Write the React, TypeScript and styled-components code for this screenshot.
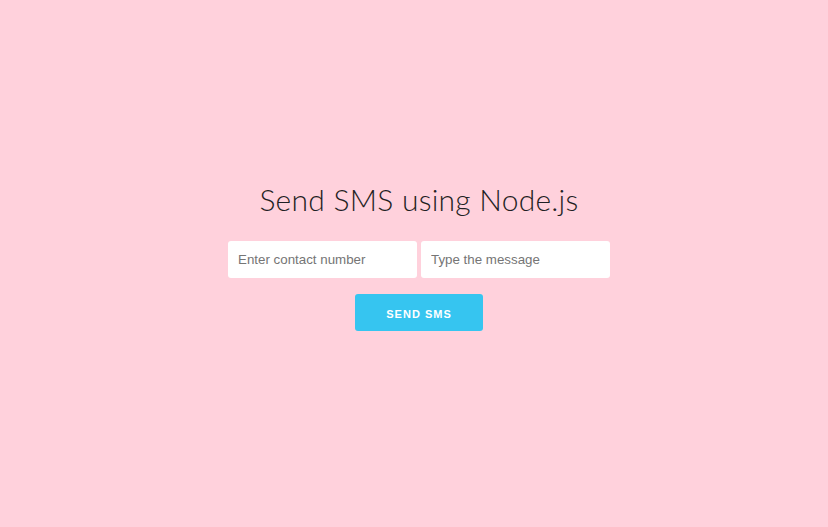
import React from "react";
import styled, { createGlobalStyle } from "styled-components";

const Global = createGlobalStyle`
  html, body { margin: 0; padding: 0; height: 100%; }
  body { background: #ffd1dc; font-family: "Liberation Sans", Arial, sans-serif; }
  #root { height: 100%; }
`;

const Page = styled.div`
  height: 527px;
  display: flex;
  flex-direction: column;
  align-items: center;
  justify-content: center;
  padding: 0 0 16px 10px;
  box-sizing: border-box;
`;

const Title = styled.h1`
  margin: 0 0 24px;
  font-family: "Lato", "Open Sans", sans-serif;
  font-weight: 300;
  font-size: 30px;
  color: #1f1f24;
  letter-spacing: 0.25px;
`;

const Row = styled.div`
  display: flex;
  gap: 4px;
`;

const Field = styled.input`
  width: 189px;
  height: 37px;
  box-sizing: border-box;
  border: none;
  border-radius: 3px;
  background: #fff;
  padding: 0 10px;
  font-family: "Liberation Sans", Arial, sans-serif;
  font-size: 13.33px;
  outline: none;
  &::placeholder { color: #757575; }
`;

const Button = styled.button`
  margin-top: 16px;
  width: 128px;
  height: 37px;
  padding: 3px 0 0;
  border: none;
  border-radius: 3px;
  background: #36c5f0;
  color: #fff;
  font-family: "Liberation Sans", Arial, sans-serif;
  font-weight: 700;
  font-size: 11px;
  letter-spacing: 1px;
  text-transform: uppercase;
  cursor: pointer;
`;

export default function App() {
  return (
    <>
      <Global />
      <Page>
        <Title>Send SMS using Node.js</Title>
        <Row>
          <Field placeholder="Enter contact number" />
          <Field placeholder="Type the message" />
        </Row>
        <Button>Send SMS</Button>
      </Page>
    </>
  );
}
